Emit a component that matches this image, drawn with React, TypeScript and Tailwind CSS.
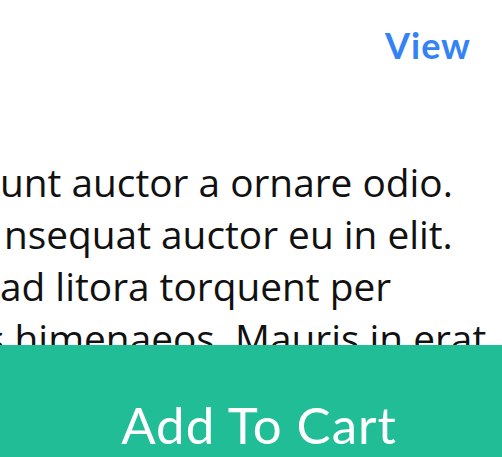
export default function App() {
  return (
    <div className="relative w-[502px] h-[457px] overflow-hidden bg-white">
      {/* Header link */}
      <div className="flex justify-end pr-[31px] pt-[21px]">
        <a href="#" className="font-['Lato',sans-serif] text-[36px] font-bold leading-[48px] tracking-[1px] text-[#3483f6]">
          View
        </a>
      </div>

      {/* Description, clipped on the left */}
      <div className="mt-[87px] font-['Open_Sans',sans-serif] text-[38.8px] leading-[52px] text-[#111] whitespace-nowrap">
        <div className="ml-[0px]">unt auctor a ornare odio.</div>
        <div className="ml-[4px]">nsequat auctor eu in elit.</div>
        <div className="ml-[0px]">ad litora torquent per</div>
        <div className="-ml-[14px]">s himenaeos. Mauris in erat</div>
      </div>

      {/* Sticky cart bar */}
      <div className="absolute inset-x-0 bottom-0 flex h-[112px] justify-center bg-[#20bd97] pl-[16px] pt-[47px]">
        <button className="font-['Lato',sans-serif] text-[51px] leading-[60px] tracking-[1px] text-white">
          Add To Cart
        </button>
      </div>
    </div>
  )
}
